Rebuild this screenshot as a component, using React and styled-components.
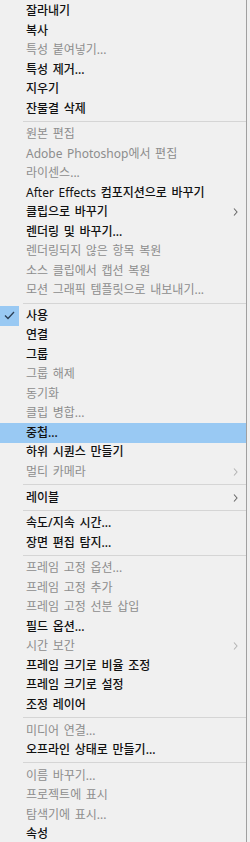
import React from "react";
import styled, { createGlobalStyle } from "styled-components";

const Global = createGlobalStyle`
  html, body { margin: 0; padding: 0; background: #f0f0f0; }
  body { overflow: hidden; }
`;

const Menu = styled.div`
  width: 247px;
  height: 842px;
  box-sizing: border-box;
  background: #f0f0f0;
  border-right: 1px solid #a0a0a0;
  padding-top: 1.25px;
  font-family: "Noto Sans", "Noto Sans CJK KR", sans-serif;
  font-size: 12px;
  line-height: 14px;
  overflow: hidden;
`;

const Row = styled.div`
  position: relative;
  height: 19.5px;
  display: flex;
  align-items: center;
  padding-left: 26px;
  word-spacing: 1.5px;
  font-weight: ${(p) => (p.$disabled ? 400 : 500)};
  color: ${(p) => (p.$disabled ? "#8d8d8d" : "#111111")};
  background: ${(p) => (p.$active ? "#99c9f3" : "transparent")};
  white-space: pre;
`;

const Latin = styled.span`
  font-weight: 400;
`;

const CheckBox = styled.span`
  position: absolute;
  left: 0;
  top: 0;
  width: 19px;
  height: 19.5px;
  background: #99c9f3;
  display: flex;
  align-items: center;
  justify-content: center;
`;

const Arrow = styled.svg`
  position: absolute;
  right: 8px;
  top: 50%;
  margin-top: -4px;
`;

const Sep = styled.div`
  height: 6.2px;
  display: flex;
  align-items: center;
  padding-left: 23px;
  &::after {
    content: "";
    flex: 1;
    height: 1px;
    background: #d5d5d5;
  }
`;

const groups = [
  [
    ["잘라내기"],
    ["복사"],
    ["특성 붙여넣기...", "d"],
    ["특성 제거..."],
    ["지우기"],
    ["잔물결 삭제"],
  ],
  [
    ["원본 편집", "d"],
    ["Adobe Photoshop에서 편집", "d"],
    ["라이센스...", "d"],
    ["After Effects 컴포지션으로 바꾸기"],
    ["클립으로 바꾸기", "s"],
    ["렌더링 및 바꾸기..."],
    ["렌더링되지 않은 항목 복원", "d"],
    ["소스 클립에서 캡션 복원", "d"],
    ["모션 그래픽 템플릿으로 내보내기...", "d"],
  ],
  [
    ["사용", "c"],
    ["연결"],
    ["그룹"],
    ["그룹 해제", "d"],
    ["동기화", "d"],
    ["클립 병합...", "d"],
    ["중첩...", "a"],
    ["하위 시퀀스 만들기"],
    ["멀티 카메라", "ds"],
  ],
  [["레이블", "s"]],
  [["속도/지속 시간..."], ["장면 편집 탐지..."]],
  [
    ["프레임 고정 옵션...", "d"],
    ["프레임 고정 추가", "d"],
    ["프레임 고정 선분 삽입", "d"],
    ["필드 옵션..."],
    ["시간 보간", "ds"],
    ["프레임 크기로 비율 조정"],
    ["프레임 크기로 설정"],
    ["조정 레이어"],
  ],
  [["미디어 연결...", "d"], ["오프라인 상태로 만들기..."]],
  [
    ["이름 바꾸기...", "d"],
    ["프로젝트에 표시", "d"],
    ["탐색기에 표시...", "d"],
    ["속성"],
  ],
];

function renderLabel(label) {
  const parts = label.split(/([A-Za-z]+(?: [A-Za-z]+)*)/);
  return parts.map((part, i) =>
    i % 2 === 1 ? <Latin key={i}>{part}</Latin> : part
  );
}

function Item({ label, flags = "" }) {
  const disabled = flags.includes("d");
  return (
    <Row $disabled={disabled} $active={flags.includes("a")}>
      {flags.includes("c") && (
        <CheckBox>
          <svg width="11" height="9" viewBox="0 0 11 9">
            <polyline points="1,4.5 4,7.5 10,1" fill="none" stroke="#2b3f55" strokeWidth="1.3" />
          </svg>
        </CheckBox>
      )}
      <span>{renderLabel(label)}</span>
      {flags.includes("s") && (
        <Arrow width="5" height="8" viewBox="0 0 5 8">
          <polyline points="1,0.5 4,4 1,7.5" fill="none" stroke={disabled ? "#b5b5b5" : "#6a6a6a"} strokeWidth="1.1" />
        </Arrow>
      )}
    </Row>
  );
}

export default function App() {
  return (
    <>
      <Global />
      <Menu>
        {groups.map((g, gi) => (
          <React.Fragment key={gi}>
            {gi > 0 && <Sep />}
            {g.map(([label, flags], i) => (
              <Item key={i} label={label} flags={flags} />
            ))}
          </React.Fragment>
        ))}
      </Menu>
    </>
  );
}
